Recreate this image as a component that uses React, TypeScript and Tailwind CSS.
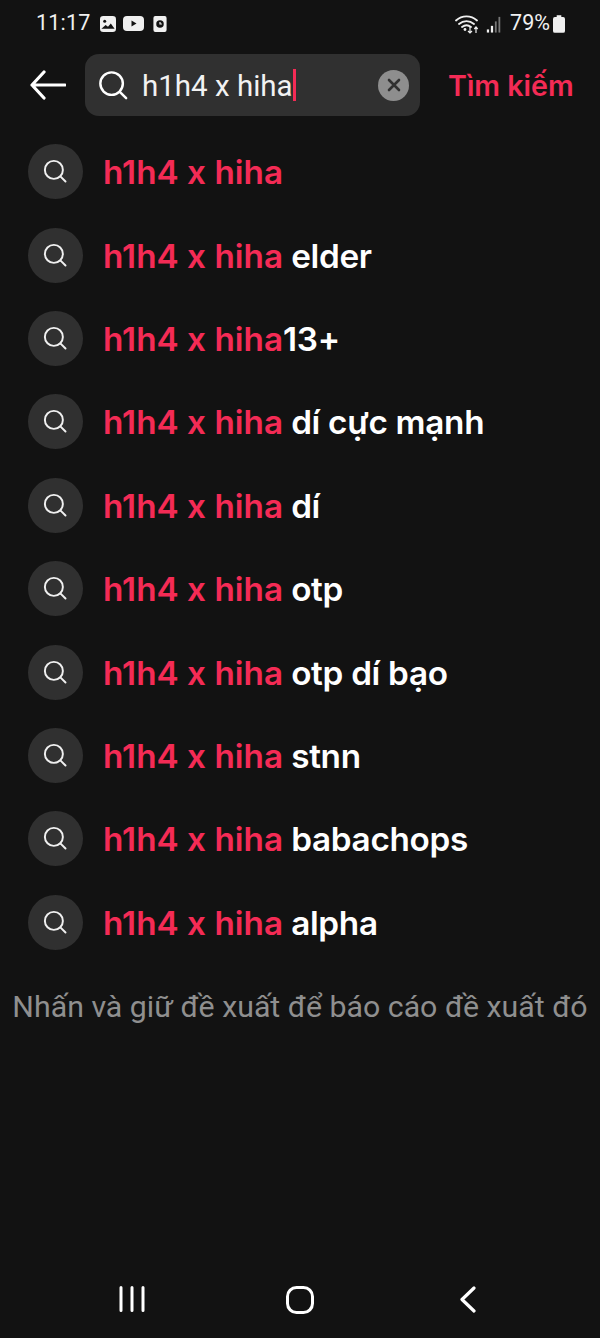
import { Fragment } from "react";

const rows = ["", " elder", "13+", " dí cực mạnh", " dí", " otp", " otp dí bạo", " stnn", " babachops", " alpha"];

const SearchIcon = ({ className }: { className: string }) => (
  <svg viewBox="0 0 32 32" fill="none" stroke="currentColor" strokeWidth="2.6" strokeLinecap="round" className={className}>
    <circle cx="14.5" cy="14.5" r="12" />
    <path d="M23.5 23.5 30 30" />
  </svg>
);

const StatusBar = () => (
  <div className="h-[46px] pt-[1px] flex items-center pl-9 pr-[35px] text-[#f0f0f0] font-['Roboto',sans-serif] text-[21.5px]">
    <span className="tracking-[0.2px]">11:17</span>
    <div className="flex items-center ml-[9px] gap-[7px]">
      <svg viewBox="0 0 17 17" className="w-[16px] h-[16px]">
        <rect width="17" height="17" rx="3.5" fill="#f0f0f0" />
        <circle cx="5" cy="5.5" r="1.6" fill="#121212" />
        <path d="M1.5 13.5 6 9.5l2.5 2L11.5 8l4 5.5z" fill="#121212" />
      </svg>
      <svg viewBox="0 0 21 15" className="w-[21px] h-[15px]">
        <rect width="21" height="15" rx="4" fill="#f0f0f0" />
        <path d="M8.5 4.5v6l5-3z" fill="#121212" />
      </svg>
      <svg viewBox="0 0 14 17" className="w-[14px] h-[16px] ml-[2px]">
        <rect width="14" height="17" rx="2" fill="#f0f0f0" />
        <circle cx="7" cy="8.5" r="4" fill="#121212" />
        <path d="M7 6.5v2h2" stroke="#f0f0f0" strokeWidth="1.3" fill="none" />
      </svg>
    </div>
    <div className="flex items-center ml-auto">
      <svg viewBox="0 0 25 20" fill="none" className="w-[25px] h-[20px]">
        <path d="M1 6.5C7 1 16 1 22 6.5M4 10c4.500-3.800 10.500-3.800 15 0M7 13c2.800-2.200 6.200-2.200 9 0" stroke="#f0f0f0" strokeWidth="1.800" strokeLinecap="round" />
        <circle cx="10" cy="15.500" r="1.400" fill="#f0f0f0" />
        <path d="M15 12v7M13 17l2 2 2-2M21 19v-6M19.300 15l1.700-2 1.700 2" stroke="#f0f0f0" strokeWidth="1.200" />
      </svg>
      <svg viewBox="0 0 16 19" className="w-[16px] h-[17px] ml-[6px] mt-[2px]">
        <rect x="0" y="15" width="2.500" height="3.500" fill="#f0f0f0" />
        <rect x="4.500" y="11" width="2.500" height="7.500" fill="#f0f0f0" />
        <rect x="9" y="6" width="2" height="12.500" fill="#777" />
        <rect x="13" y="1" width="2" height="17.500" fill="#777" />
      </svg>
      <span className="ml-[8px]">79%</span>
      <svg viewBox="0 0 13 19" className="w-[12px] h-[18px] ml-[3px]">
        <rect x="4" y="0" width="5" height="3" fill="#f0f0f0" />
        <rect x="0" y="2" width="13" height="17" rx="2" fill="#f0f0f0" />
      </svg>
    </div>
  </div>
);

export default function App() {
  return (
    <div className="w-[600px] h-[1338px] bg-[#121212] flex flex-col overflow-hidden font-['Inter',sans-serif]">
      <StatusBar />

      {/* Search header */}
      <div className="flex items-center mt-2 h-[62px]">
        <svg viewBox="0 0 36 30" fill="none" stroke="#fff" strokeWidth="3.200" strokeLinecap="round" strokeLinejoin="round" className="w-9 h-[30px] ml-[30px]">
          <path d="M35 15H2M14 2 2 15l12 13" />
        </svg>
        <div className="w-[335px] h-[62px] ml-[19px] rounded-[14px] bg-[#303030] flex items-center pl-[13px] pr-[11px]">
          <SearchIcon className="w-[30px] h-[30px] text-white shrink-0" />
          <span className="ml-[14px] pt-[3px] text-[29.5px] text-[#f2f2f2] font-['Roboto',sans-serif] leading-none">h1h4 x hiha</span>
          <span className="w-[3px] h-[32px] bg-[#f42b55] ml-0" />
          <div className="ml-auto w-[31px] h-[31px] rounded-full bg-[#8e8e8e] flex items-center justify-center">
            <svg viewBox="0 0 14 14" fill="none" stroke="#303030" strokeWidth="2.600" strokeLinecap="round" className="w-[14px] h-[14px]">
              <path d="M2 2l10 10M12 2 2 12" />
            </svg>
          </div>
        </div>
        <span className="ml-[28px] pt-[3px] text-[#f42b55] text-[28.6px] font-semibold whitespace-nowrap">Tìm kiếm</span>
      </div>

      {/* Suggestions */}
      <div className="flex flex-col mt-[14px]">
        {rows.map((rest, i) => (
          <div key={i} className="h-[83.4px] flex items-center pl-7">
            <div className="w-[55px] h-[55px] rounded-full bg-[#303030] flex items-center justify-center">
              <SearchIcon className="w-6 h-6 text-[#f0f0f0] -mt-[1px] -ml-[1px]" />
            </div>
            <p className="ml-[20px] pt-[3px] text-[33.300px] font-semibold text-white whitespace-pre">
              <Fragment>
                <span className="text-[#f42b55]">h1h4 x hiha</span>
                <span className="tracking-[-0.3px]">{rest}</span>
              </Fragment>
            </p>
          </div>
        ))}
      </div>

      <p className="mt-[20px] text-center text-[#8f8f8f] text-[30.300px] font-['Roboto',sans-serif] whitespace-nowrap">
        Nhấn và giữ đề xuất để báo cáo đề xuất đó
      </p>

      {/* Android nav */}
      <div className="mt-auto h-[52px] flex items-start pl-[119px]">
        <svg viewBox="0 0 26 26" fill="none" stroke="#fff" strokeWidth="3" strokeLinecap="round" className="w-[26px] h-[26px]">
          <path d="M2 1.500v23M13 1.500v23M24 1.500v23" />
        </svg>
        <svg viewBox="0 0 28 28" fill="none" stroke="#fff" strokeWidth="3" className="w-7 h-7 ml-[141px]">
          <rect x="1.500" y="1.500" width="25" height="25" rx="9" />
        </svg>
        <svg viewBox="0 0 16 27" fill="none" stroke="#fff" strokeWidth="3.200" strokeLinecap="round" strokeLinejoin="round" className="w-4 h-[27px] ml-[146px]">
          <path d="M14 2 2 13.500 14 25" />
        </svg>
      </div>
    </div>
  );
}
